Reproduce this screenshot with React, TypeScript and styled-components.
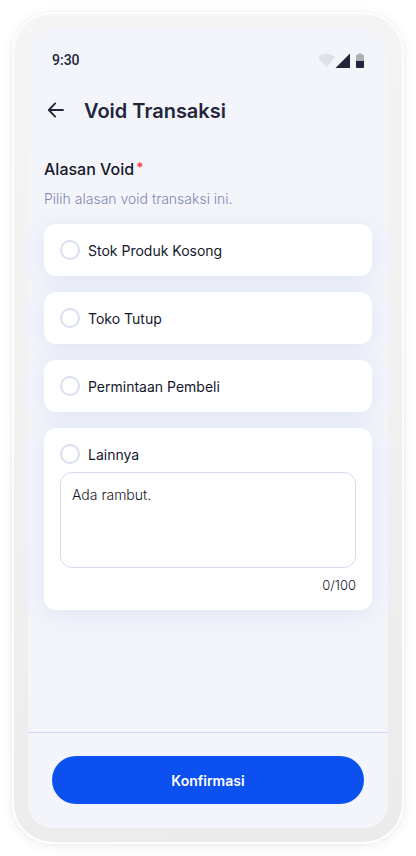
import React, { useState } from "react";
import styled, { createGlobalStyle } from "styled-components";

const color = {
  ink: "#23253b",
  text: "#15172b",
  muted: "#8085b3",
  surface: "#f3f5fb",
  line: "#d2d8f2",
  primary: "#0d50f0",
};

const GlobalStyle = createGlobalStyle`
  *, *::before, *::after { box-sizing: border-box; }
  body {
    margin: 0;
    background: #ffffff;
    color: ${color.text};
    font-family: Inter, "Noto Sans", sans-serif;
  }
`;

const Page = styled.div`
  min-height: 100vh;
  padding: 12px;
  display: flex;
  overflow: hidden;
`;

const Device = styled.div`
  flex: 1;
  min-width: 0;
  display: flex;
  padding: 14px;
  border: 2px solid #fdfdfd;
  border-radius: 40px;
  background: linear-gradient(165deg, #f5f5f5 0%, #f1f1f1 45%, #ebebeb 100%);
  background-clip: padding-box;
  box-shadow: 0 0 2px rgba(0, 0, 0, 0.08), 0 2px 12px rgba(0, 0, 0, 0.07);
`;

const Screen = styled.div`
  flex: 1;
  min-width: 0;
  display: flex;
  flex-direction: column;
  overflow: hidden;
  border-radius: 24px;
  background: ${color.surface};
`;

const StatusBar = styled.div`
  display: flex;
  align-items: center;
  justify-content: space-between;
  height: 64px;
  padding: 0 24px;
  color: ${color.ink};
  font: 500 14px/20px Roboto, sans-serif;
`;

const StatusIcons = styled.svg`
  width: 46px;
  height: 16px;
  margin-top: 2px;
  display: block;
`;

const Header = styled.header`
  display: flex;
  align-items: center;
  gap: 16px;
  height: 36px;
  padding: 0 16px;
`;

const BackButton = styled.button`
  width: 24px;
  height: 24px;
  padding: 0;
  border: 0;
  background: none;
  color: ${color.ink};
  cursor: pointer;

  svg {
    display: block;
  }
`;

const Title = styled.h1`
  margin: 0;
  padding-top: 2px;
  color: ${color.ink};
  font-size: 20px;
  line-height: 28px;
  font-weight: 600;
`;

const Reasons = styled.fieldset`
  flex: 1;
  min-width: 0;
  margin: 0;
  padding: 28px 16px 32px;
  border: 0;
  display: flex;
  flex-direction: column;
  gap: 16px;
`;

const Intro = styled.div`
  display: flex;
  flex-direction: column;
  gap: 8px;
`;

const GroupLabel = styled.div`
  display: flex;
  gap: 2px;
  font-size: 16px;
  line-height: 26px;
  font-weight: 500;
`;

const Required = styled.span`
  color: #ee3a36;
  font-size: 14px;
  line-height: 24px;
`;

const Hint = styled.p`
  margin: 0;
  color: ${color.muted};
  font-size: 14px;
  line-height: 18px;
  font-weight: 300;
`;

const Card = styled.div`
  padding: 16px;
  border-radius: 12px;
  background: #ffffff;
  box-shadow: 0 4px 24px rgba(60, 90, 180, 0.1);
`;

const Option = styled.label`
  display: flex;
  align-items: center;
  gap: 8px;
  font-size: 14px;
  line-height: 18px;
  cursor: pointer;
`;

const OptionText = styled.span`
  padding-top: 2px;
`;

const Radio = styled.input`
  appearance: none;
  flex: none;
  width: 20px;
  height: 20px;
  margin: 0;
  border: 2px solid #dadff0;
  border-radius: 50%;
  background: #ffffff;

  &:checked {
    border: 6px solid ${color.primary};
  }
`;

const Note = styled.textarea`
  display: block;
  width: 100%;
  height: 96px;
  margin: 8px 0;
  padding: 12px 11px;
  border: 1px solid #d8daee;
  border-radius: 12px;
  background: #ffffff;
  color: ${color.text};
  font: 300 14px/20px Inter, "Noto Sans", sans-serif;
  resize: none;
`;

const Counter = styled.div`
  font-size: 13px;
  line-height: 18px;
  font-weight: 300;
  text-align: right;
`;

const Footer = styled.footer`
  padding: 23px 24px 24px;
  border-top: 1px solid ${color.line};
`;

const ConfirmButton = styled.button`
  display: block;
  width: 100%;
  height: 48px;
  padding: 2px 16px 0;
  border: 0;
  border-radius: 24px;
  background: ${color.primary};
  color: #ffffff;
  font: 600 14px/20px Inter, "Noto Sans", sans-serif;
  cursor: pointer;
`;

const reasons = ["Stok Produk Kosong", "Toko Tutup", "Permintaan Pembeli"];
const other = "Lainnya";

export default function App() {
  const [reason, setReason] = useState<string | null>(null);
  const [note, setNote] = useState("Ada rambut.");

  const option = (name: string) => (
    <Option>
      <Radio
        type="radio"
        name="reason"
        value={name}
        checked={reason === name}
        onChange={() => setReason(name)}
      />
      <OptionText>{name}</OptionText>
    </Option>
  );

  return (
    <>
      <GlobalStyle />
      <Page>
        <Device>
          <Screen>
            <StatusBar>
              <span>9:30</span>
              <StatusIcons viewBox="0 0 46 16" aria-hidden="true">
                <path d="M0 4.2C5-.4 12-.4 17 4.2L8.5 14.5Z" fill="#dfe1e8" />
                <path d="M17.5 15 32 .5V15Z" fill={color.ink} />
                <path d="M38 8V2.5q0-1 1-1h1.5V.2h3v1.3H45q1 0 1 1V8Z" fill="#aeafb4" />
                <path d="M38 8h8v6q0 1-1 1h-6q-1 0-1-1Z" fill={color.ink} />
              </StatusIcons>
            </StatusBar>
            <Header>
              <BackButton type="button" aria-label="Kembali">
                <svg width="24" height="24" viewBox="0 0 24 24" fill="none" stroke="currentColor" strokeWidth="1.8" strokeLinecap="round" strokeLinejoin="round">
                  <path d="M19 12H5M11.2 5.4 4.8 12l6.4 6.6" />
                </svg>
              </BackButton>
              <Title>Void Transaksi</Title>
            </Header>
            <Reasons aria-labelledby="reason-label">
              <Intro>
                <GroupLabel id="reason-label">
                  Alasan Void
                  <Required>*</Required>
                </GroupLabel>
                <Hint>Pilih alasan void transaksi ini.</Hint>
              </Intro>
              {reasons.map((name) => (
                <Card key={name}>{option(name)}</Card>
              ))}
              <Card>
                {option(other)}
                <Note
                  aria-label="Alasan lainnya"
                  maxLength={100}
                  value={note}
                  onChange={(event) => setNote(event.target.value)}
                />
                <Counter>0/100</Counter>
              </Card>
            </Reasons>
            <Footer>
              <ConfirmButton type="button">Konfirmasi</ConfirmButton>
            </Footer>
          </Screen>
        </Device>
      </Page>
    </>
  );
}
